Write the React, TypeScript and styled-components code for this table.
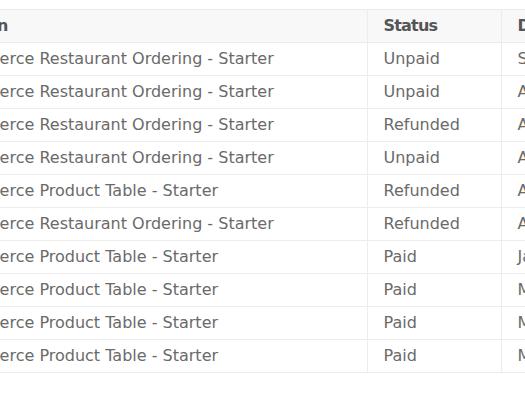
import React from 'react';
import styled, { createGlobalStyle } from 'styled-components';

const GlobalStyle = createGlobalStyle`
  body {
    margin: 0;
    background: #fff;
    font-family: "DejaVu Sans", "Liberation Sans", sans-serif;
  }
`;

// how far the table is scrolled to the left
const SHIFT = 103;

const Page = styled.div`
  padding-top: 9px;
  width: 525px;
  height: 393px;
  overflow: hidden;
`;

const Table = styled.table`
  border-collapse: collapse;
  margin-left: -${SHIFT}px;
  font-size: 16px;
  color: #6a6a6a;
  table-layout: fixed;
  width: 800px;
`;

const HeadCell = styled.th<{ $width?: number }>`
  box-sizing: border-box;
  width: ${(p) => (p.$width ? `${p.$width}px` : 'auto')};
  background: #f8f8f8;
  color: #555;
  font-weight: 700;
  letter-spacing: -0.8px;
  text-align: left;
  padding: 0 16px 2px;
  height: 33px;
  border-top: 1px solid #ececec;
  border-bottom: 1px solid #ececec;
  border-left: 1px solid #ececec;
  white-space: nowrap;
  &:first-child {
    border-left: none;
  }
`;

const Cell = styled.td`
  box-sizing: border-box;
  padding: 0 16px 2px;
  height: 33px;
  border-bottom: 1px solid #ececec;
  border-left: 1px solid #ececec;
  white-space: nowrap;
  &:first-child {
    border-left: none;
  }
`;

const orders = [
  { name: 'WooCommerce Restaurant Ordering - Starter', status: 'Unpaid', date: 'September 14, 2023' },
  { name: 'WooCommerce Restaurant Ordering - Starter', status: 'Unpaid', date: 'August 29, 2023' },
  { name: 'WooCommerce Restaurant Ordering - Starter', status: 'Refunded', date: 'August 3, 2023' },
  { name: 'WooCommerce Restaurant Ordering - Starter', status: 'Unpaid', date: 'April 21, 2023' },
  { name: 'WooCommerce Product Table - Starter', status: 'Refunded', date: 'April 11, 2023' },
  { name: 'WooCommerce Restaurant Ordering - Starter', status: 'Refunded', date: 'April 2, 2023' },
  { name: 'WooCommerce Product Table - Starter', status: 'Paid', date: 'January 18, 2023' },
  { name: 'WooCommerce Product Table - Starter', status: 'Paid', date: 'March 9, 2023' },
  { name: 'WooCommerce Product Table - Starter', status: 'Paid', date: 'May 5, 2023' },
  { name: 'WooCommerce Product Table - Starter', status: 'Paid', date: 'May 1, 2023' },
];

export default function App() {
  return (
    <>
      <GlobalStyle />
      <Page>
        <Table>
          <thead>
            <tr>
              <HeadCell $width={367 + SHIFT}>Description</HeadCell>
              <HeadCell $width={134}>Status</HeadCell>
              <HeadCell>Date</HeadCell>
            </tr>
          </thead>
          <tbody>
            {orders.map((o, i) => (
              <tr key={i}>
                <Cell>{o.name}</Cell>
                <Cell>{o.status}</Cell>
                <Cell>{o.date}</Cell>
              </tr>
            ))}
          </tbody>
        </Table>
      </Page>
    </>
  );
}
